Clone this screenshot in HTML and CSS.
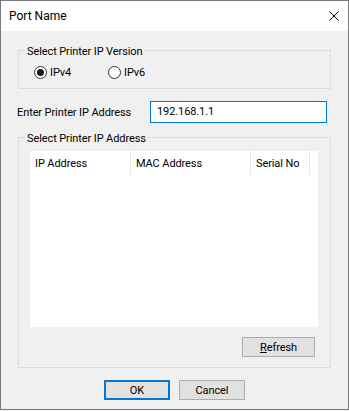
FILE: index.html
```html
<!DOCTYPE html>
<html>
<head>
<meta charset="utf-8">
<title>Port Name</title>
<link rel="stylesheet" href="styles.css">
</head>
<body>
<div class="window">
  <div class="titlebar">
    <span class="title">Port Name</span>
    <svg class="close" width="10" height="10" viewBox="0 0 10 10"><path d="M0.5 0.5L9.5 9.5M9.5 0.5L0.5 9.5" stroke="#000" stroke-width="1" fill="none"/></svg>
  </div>
  <div class="content">
    <fieldset class="group group-version">
      <legend>Select Printer IP Version</legend>
      <div class="radios">
        <label class="option option-first"><span class="radio checked"></span><span class="opt-text">IPv4</span></label>
        <label class="option"><span class="radio"></span><span class="opt-text">IPv6</span></label>
      </div>
    </fieldset>
    <div class="iprow">
      <span class="iplabel">Enter Printer IP Address</span>
      <div class="ipinput">192.168.1.1</div>
    </div>
    <fieldset class="group group-list">
      <legend>Select Printer IP Address</legend>
      <div class="listview">
        <div class="lv-header">
          <div class="lv-col col-ip">IP Address</div>
          <div class="lv-col col-mac">MAC Address</div>
          <div class="lv-col col-serial">Serial No</div>
        </div>
      </div>
      <div class="refresh-row">
        <button class="btn btn-refresh"><u>R</u>efresh</button>
      </div>
    </fieldset>
    <div class="buttons">
      <button class="btn btn-default">OK</button>
      <button class="btn">Cancel</button>
    </div>
  </div>
</div>
</body>
</html>
```
FILE: styles.css
```css
* { box-sizing: border-box; }
html, body { margin: 0; padding: 0; background: #f0f0f0; }
body {
  font-family: Roboto, "Liberation Sans", sans-serif;
  font-size: 11px;
  letter-spacing: -0.1px;
  color: #000;
}
.window {
  width: 349px;
  height: 410px;
  border: 1px solid #7a7a7a;
  background: #f0f0f0;
  display: flex;
  flex-direction: column;
}
.titlebar {
  height: 30px;
  background: #fff;
  display: flex;
  align-items: center;
  justify-content: space-between;
  padding: 0 9px 0 8px;
  flex: none;
}
.title {
  font-size: 12px;
  letter-spacing: 0;
  line-height: 16px;
}
.close { display: block; }
.content {
  padding: 11px 17px 0 17px;
}
.group {
  margin: 0;
  border: 1px solid #dcdcdc;
  padding: 0 0 0 6px;
  min-width: 0;
}
.group legend {
  padding: 3px 2px 0;
  line-height: 13px;
}
.radios {
  display: flex;
  padding: 8px 0 9px 9px;
}
.option {
  display: flex;
  align-items: center;
  height: 13px;
}
.option-first { width: 74px; }
.radio {
  width: 13px;
  height: 13px;
  border: 1px solid #333;
  border-radius: 50%;
  background: #fff;
  display: flex;
  align-items: center;
  justify-content: center;
  flex: none;
}
.radio.checked::after {
  content: "";
  width: 7px;
  height: 7px;
  border-radius: 50%;
  background: #1a1a1a;
}
.opt-text { margin-left: 3px; }
.iprow {
  display: flex;
  align-items: center;
  margin-top: 12px;
  margin-left: -1px;
}
.iplabel { width: 133px; }
.ipinput {
  width: 177px;
  height: 22px;
  border: 1px solid #0078d7;
  background: #fff;
  padding-left: 6px;
  line-height: 20px;
}
.group-list {
  margin-top: 6px;
  padding-right: 12px;
}
.listview {
  margin: 6px 0 0 5px;
  width: 288px;
  height: 176px;
  background: #fff;
}
.lv-header {
  display: flex;
  height: 24px;
}
.lv-col {
  border-right: 1px solid #e5e5e5;
  padding: 1px 0 0 5px;
  line-height: 23px;
  white-space: nowrap;
}
.col-ip { width: 101px; }
.col-mac { width: 120px; }
.col-serial { width: 59px; }
.refresh-row {
  display: flex;
  justify-content: flex-end;
  margin: 10px 3px 10px 0;
}
.btn {
  font-family: inherit;
  font-size: 11px;
  letter-spacing: -0.1px;
  color: #000;
  background: #e1e1e1;
  border: 1px solid #adadad;
  height: 20px;
  padding: 0;
  margin: 0;
}
.btn-refresh { width: 73px; }
.buttons {
  display: flex;
  justify-content: center;
  gap: 9px;
  margin-top: 12px;
}
.buttons .btn { width: 66px; }
.btn-default { border: 2px solid #0078d7; }
```
